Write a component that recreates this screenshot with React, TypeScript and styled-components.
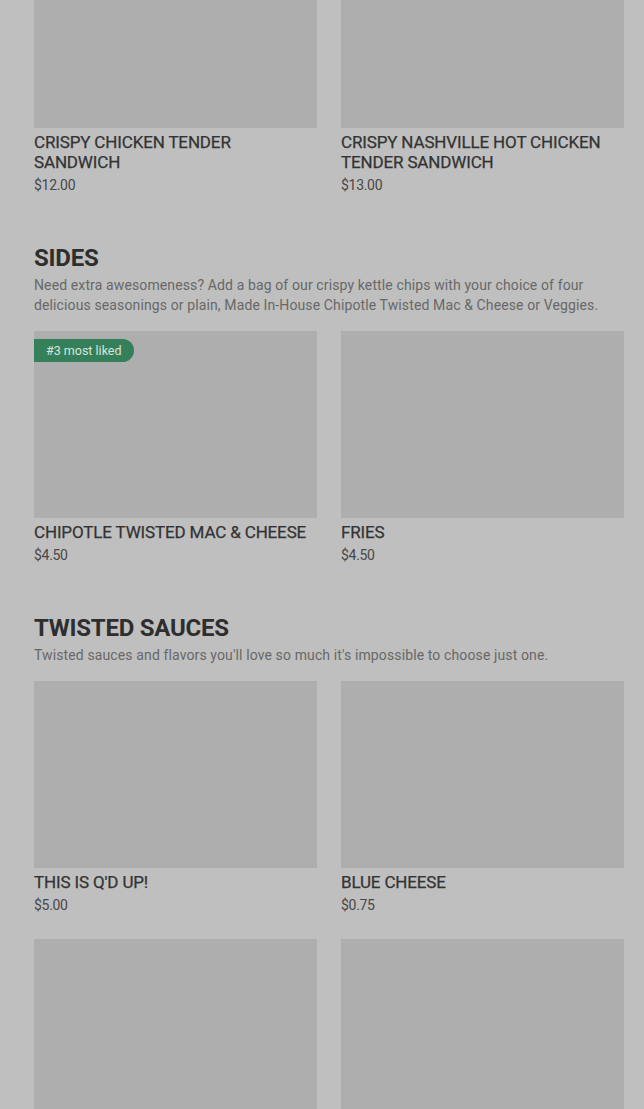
import React from "react";
import styled, { createGlobalStyle } from "styled-components";

const Global = createGlobalStyle`
  html, body { margin: 0; padding: 0; background: #bfbfbf; }
  body { font-family: Roboto, "Noto Sans", "Liberation Sans", sans-serif; overflow: hidden; }
`;

const Page = styled.main`
  padding: 0 20px 0 34px;
  margin-top: -59px;
  display: flex;
  flex-direction: column;
  gap: 48px;
`;

const Section = styled.section`
  display: flex;
  flex-direction: column;
`;

const Heading = styled.h2`
  margin: 0;
  font-size: 24px;
  line-height: 30px;
  font-weight: 700;
  letter-spacing: -0.25px;
  color: #2e2e2e;
`;

const Description = styled.p`
  margin: 2px 0 16px;
  font-size: 14px;
  line-height: 20px;
  color: #686868;
  letter-spacing: 0.12px;
`;

const Grid = styled.div`
  display: grid;
  grid-template-columns: 1fr 1fr;
  column-gap: 24px;
  row-gap: 24px;
`;

const Card = styled.article`
  display: flex;
  flex-direction: column;
`;

const Thumb = styled.div`
  position: relative;
  height: 187px;
  background: #aeaeae;
`;

const Badge = styled.span`
  position: absolute;
  top: 8px;
  left: 0;
  height: 23px;
  padding: 0 12px 0 12px;
  display: flex;
  align-items: center;
  background: #35805a;
  color: #d6e4dc;
  font-size: 12.5px;
  border-radius: 0 12px 12px 0;
`;

const Title = styled.h3`
  margin: 4px 0 0;
  font-size: 17px;
  line-height: 20px;
  font-weight: 400;
  color: #333333;
  text-transform: uppercase;
  letter-spacing: -0.15px;
  -webkit-text-stroke: 0.25px #333333;
`;

const Price = styled.div`
  margin-top: 3px;
  font-size: 14px;
  line-height: 20px;
  color: #484848;
  letter-spacing: -0.3px;
`;

type Item = { name: string; price: string; badge?: string };

const ItemCard = ({ item }: { item: Item }) => (
  <Card>
    <Thumb>{item.badge && <Badge>{item.badge}</Badge>}</Thumb>
    <Title>{item.name}</Title>
    <Price>{item.price}</Price>
  </Card>
);

const sandwiches: Item[] = [
  { name: "Crispy Chicken Tender Sandwich", price: "$12.00" },
  { name: "Crispy Nashville Hot Chicken Tender Sandwich", price: "$13.00" },
];

const sides: Item[] = [
  { name: "Chipotle Twisted Mac & Cheese", price: "$4.50", badge: "#3 most liked" },
  { name: "Fries", price: "$4.50" },
];

const sauces: Item[] = [
  { name: "This Is Q'd Up!", price: "$5.00" },
  { name: "Blue Cheese", price: "$0.75" },
  { name: "", price: "" },
  { name: "", price: "" },
];

export default function App() {
  return (
    <>
      <Global />
      <Page>
        <Section>
          <Grid>
            {sandwiches.map((i) => (
              <ItemCard key={i.name} item={i} />
            ))}
          </Grid>
        </Section>
        <Section>
          <Heading>SIDES</Heading>
          <Description>
            Need extra awesomeness? Add a bag of our crispy kettle chips with your choice of four
            delicious seasonings or plain, Made In-House Chipotle Twisted Mac &amp; Cheese or Veggies.
          </Description>
          <Grid>
            {sides.map((i) => (
              <ItemCard key={i.name} item={i} />
            ))}
          </Grid>
        </Section>
        <Section>
          <Heading>TWISTED SAUCES</Heading>
          <Description>
            Twisted sauces and flavors you'll love so much it's impossible to choose just one.
          </Description>
          <Grid>
            {sauces.map((i, n) => (
              <ItemCard key={n} item={i} />
            ))}
          </Grid>
        </Section>
      </Page>
    </>
  );
}
